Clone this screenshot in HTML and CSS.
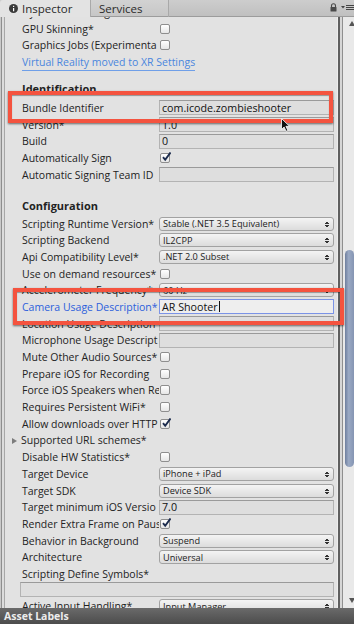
FILE: index.html
```html
<!DOCTYPE html>
<html lang="en">
  <head>
    <meta charset="UTF-8" />
    <title>Inspector</title>
    <link rel="stylesheet" href="styles.css">
  </head>

  <body>
    <div class="window">
      <div class="tabbar">
        <div class="tab active">
          <svg class="info" width="9" height="9" viewBox="0 0 9 9"><circle cx="4.5" cy="4.5" r="4.5" fill="#3a3a3a"/><rect x="4" y="4" width="1.2" height="3.3" fill="#fff"/><rect x="4" y="1.8" width="1.2" height="1.2" fill="#fff"/></svg>
          <span>Inspector</span>
        </div>
        <div class="tab">Services</div>
        <div class="tools">
          <svg width="7" height="9" viewBox="0 0 7 9"><path d="M1.5 4V2.8a2 2 0 0 1 4 0V4" fill="none" stroke="#4a4a4a" stroke-width="1.1"/><rect x="0.5" y="4" width="6" height="4.5" rx="0.6" fill="#4a4a4a"/></svg>
          <svg width="13" height="7" viewBox="0 0 13 7"><path d="M0 2h4L2 4.5z" fill="#444"/><rect x="5" y="1" width="8" height="1" fill="#444"/><rect x="5" y="3" width="8" height="1" fill="#444"/><rect x="5" y="5" width="8" height="1" fill="#444"/></svg>
        </div>
      </div>

      <div class="body">
        <div class="gutter"></div>
        <div class="inspector">
          <div class="list">
            <div class="row"><span class="label">Dynamic Batching</span><span class="value"><i class="check"></i></span></div>
            <div class="row"><span class="label">GPU Skinning*</span><span class="value"><i class="check"></i></span></div>
            <div class="row"><span class="label">Graphics Jobs (Experimenta</span><span class="value"><i class="check"></i></span></div>
            <div class="row"><span class="label full"><span class="link">Virtual Reality moved to XR Settings</span></span></div>

            <div class="row head first">Identification</div>
            <div class="row"><span class="label">Bundle Identifier</span><span class="value"><span class="field">com.icode.zombieshooter</span></span></div>
            <div class="row"><span class="label">Version*</span><span class="value"><span class="field">1.0</span></span></div>
            <div class="row"><span class="label">Build</span><span class="value"><span class="field">0</span></span></div>
            <div class="row"><span class="label">Automatically Sign</span><span class="value"><i class="check on"><svg viewBox="0 0 10 10"><path d="M2 5.2l2.2 2.6L9.5 0.5" fill="none" stroke="#1c2c4e" stroke-width="1.9"/></svg></i></span></div>
            <div class="row"><span class="label">Automatic Signing Team ID</span><span class="value"><span class="field"></span></span></div>

            <div class="row head second">Configuration</div>
            <div class="row"><span class="label">Scripting Runtime Version*</span><span class="value"><span class="popup">Stable (.NET 3.5 Equivalent)</span></span></div>
            <div class="row"><span class="label">Scripting Backend</span><span class="value"><span class="popup">IL2CPP</span></span></div>
            <div class="row"><span class="label">Api Compatibility Level*</span><span class="value"><span class="popup">.NET 2.0 Subset</span></span></div>
            <div class="row"><span class="label">Use on demand resources*</span><span class="value"><i class="check"></i></span></div>
            <div class="row"><span class="label">Accelerometer Frequency*</span><span class="value"><span class="popup">60 Hz</span></span></div>
            <div class="row"><span class="label focus">Camera Usage Description*</span><span class="value"><span class="field active">AR Shooter<b class="caret"></b></span></span></div>
            <div class="row"><span class="label">Location Usage Description</span><span class="value"><span class="field"></span></span></div>
            <div class="row"><span class="label">Microphone Usage Descript</span><span class="value"><span class="field"></span></span></div>
            <div class="row"><span class="label">Mute Other Audio Sources*</span><span class="value"><i class="check"></i></span></div>
            <div class="row"><span class="label">Prepare iOS for Recording</span><span class="value"><i class="check"></i></span></div>
            <div class="row"><span class="label">Force iOS Speakers when Re</span><span class="value"><i class="check"></i></span></div>
            <div class="row"><span class="label">Requires Persistent WiFi*</span><span class="value"><i class="check"></i></span></div>
            <div class="row"><span class="label">Allow downloads over HTTP</span><span class="value"><i class="check on"><svg viewBox="0 0 10 10"><path d="M2 5.2l2.2 2.6L9.5 0.5" fill="none" stroke="#1c2c4e" stroke-width="1.9"/></svg></i></span></div>
            <div class="row"><span class="label"><i class="fold"></i>Supported URL schemes*</span></div>
            <div class="row"><span class="label">Disable HW Statistics*</span><span class="value"><i class="check"></i></span></div>
            <div class="row"><span class="label">Target Device</span><span class="value"><span class="popup">iPhone + iPad</span></span></div>
            <div class="row"><span class="label">Target SDK</span><span class="value"><span class="popup">Device SDK</span></span></div>
            <div class="row"><span class="label">Target minimum iOS Versio</span><span class="value"><span class="field">7.0</span></span></div>
            <div class="row"><span class="label">Render Extra Frame on Paus</span><span class="value"><i class="check on"><svg viewBox="0 0 10 10"><path d="M2 5.2l2.2 2.6L9.5 0.5" fill="none" stroke="#1c2c4e" stroke-width="1.9"/></svg></i></span></div>
            <div class="row"><span class="label">Behavior in Background</span><span class="value"><span class="popup">Suspend</span></span></div>
            <div class="row"><span class="label">Architecture</span><span class="value"><span class="popup">Universal</span></span></div>
            <div class="row"><span class="label">Scripting Define Symbols*</span></div>
            <div class="field wide"></div>
            <div class="row"><span class="label">Active Input Handling*</span><span class="value"><span class="popup">Input Manager</span></span></div>
          </div>
        </div>
        <div class="divider"></div>
        <div class="scroll">
          <i class="arrow up"></i>
          <div class="thumb"></div>
          <i class="arrow down"></i>
        </div>
      </div>

      <div class="footer">Asset Labels</div>

      <div class="mark one"></div>
      <div class="mark two"></div>
      <svg class="pointer" width="10" height="14" viewBox="0 0 10 14"><path d="M0.5 0.5v11l2.6-2.5 2 4.3 1.8-0.8-2-4.2h3.6z" fill="#111" stroke="#fff" stroke-width="0.8"/></svg>
    </div>
  </body>
</html>
```

FILE: styles.css
```css
* {
  box-sizing: border-box;
}
body {
  margin: 0;
  width: 354px;
  height: 624px;
  overflow: hidden;
  font-family: "Open Sans", "DejaVu Sans", sans-serif;
  font-size: 10.5px;
  color: #222;
  background: #c4c4c4;
}
.window {
  position: relative;
  width: 354px;
  height: 624px;
  display: flex;
  flex-direction: column;
}

/* tabs */
.tabbar {
  height: 17px;
  flex: none;
  display: flex;
  background: linear-gradient(#cdcdcd, #bfbfbf);
  box-shadow: inset 0 -1px 0 #9c9c9c;
}
.tab {
  width: 78px;
  padding-left: 8px;
  display: flex;
  align-items: center;
  font-size: 11.5px;
  color: #2a2a2a;
  border-right: 1px solid #a9a9a9;
  background: linear-gradient(#d2d2d2, #c6c6c6);
  box-shadow: inset 0 -1px 0 #9c9c9c;
}
.tab.active {
  width: 91px;
  padding-left: 9px;
  background: #e3e3e3;
  border-top-left-radius: 3px;
  box-shadow: none;
}
.tab .info {
  margin-right: 4px;
}
.tools {
  margin-left: auto;
  display: flex;
  align-items: center;
  gap: 4px;
  padding-bottom: 2px;
}

/* body */
.body {
  flex: 1;
  display: flex;
  min-height: 0;
}
.gutter {
  width: 5px;
  flex: none;
  background: linear-gradient(to right, #c9c9c9 0 1px, #8e8e8e 1px 2px, #dcdcdc 2px 4px, #a7a7a7 4px 5px);
}
.inspector {
  flex: 1;
  overflow: hidden;
  background: #e2e2e2;
  padding-right: 3px;
}
.list {
  margin-top: -13.35px;
}
.row {
  height: 16.7px;
  display: flex;
  align-items: center;
  white-space: nowrap;
}
.label {
  flex: none;
  width: 154px;
  padding-left: 17px;
  overflow: hidden;
}
.label.full {
  width: auto;
  overflow: visible;
}
.label.focus {
  color: #2c60dc;
}
.value {
  flex: 1;
  display: flex;
  align-items: center;
  min-width: 0;
}
.link {
  color: #4a86de;
  border-bottom: 1px solid #6f9fe8;
  padding-bottom: 1px;
}
.head {
  font-weight: bold;
  font-size: 11px;
  padding-left: 17px;
}
.head.first {
  margin-top: 10.2px;
  margin-bottom: 2.3px;
}
.head.second {
  margin-top: 14.2px;
  margin-bottom: 1.3px;
}

/* controls */
.check {
  width: 10px;
  height: 10px;
  margin-left: 1px;
  border: 1px solid #8e8e8e;
  border-radius: 2px;
  background: linear-gradient(#ffffff, #e6e6e6);
  position: relative;
}
.check svg {
  position: absolute;
  left: 0;
  top: -2px;
  width: 10px;
  height: 10px;
}
.field {
  flex: 1;
  height: 15px;
  display: flex;
  align-items: center;
  padding-left: 2px;
  font-size: 10.7px;
  background: #dedede;
  border: 1px solid #b3b3b3;
  border-top-color: #9a9a9a;
  color: #111;
}
.field.active {
  background: #eeeeee;
  border: 1px solid #7b93e6;
}
.caret {
  width: 1px;
  height: 11px;
  margin-left: 1px;
  background: #111;
}
.field.wide {
  flex: none;
  margin: 0 0 0.6px 15px;
  height: 15px;
}
.popup {
  flex: 1;
  height: 14px;
  display: flex;
  align-items: center;
  padding-left: 3px;
  font-size: 9.2px;
  border: 1px solid #a2a2a2;
  border-radius: 3px;
  background: linear-gradient(#f4f4f4, #dcdcdc);
  position: relative;
}
.popup::after {
  content: "";
  position: absolute;
  right: 4px;
  top: 3px;
  width: 4px;
  height: 7px;
  background:
    linear-gradient(to bottom right, transparent 50%, #333 50%) 0 0 / 2px 3px no-repeat,
    linear-gradient(to bottom left, transparent 50%, #333 50%) 2px 0 / 2px 3px no-repeat,
    linear-gradient(to top right, transparent 50%, #333 50%) 0 4px / 2px 3px no-repeat,
    linear-gradient(to top left, transparent 50%, #333 50%) 2px 4px / 2px 3px no-repeat;
}
.fold {
  width: 0;
  height: 0;
  display: inline-block;
  margin-left: -10px;
  margin-right: 4px;
  border-left: 5px solid #7c7c7c;
  border-top: 3.5px solid transparent;
  border-bottom: 3.5px solid transparent;
}

/* scrollbar */
.divider {
  width: 6px;
  flex: none;
  background: linear-gradient(to right, #ededed 0 1px, #5f5f5f 1px 3px, #d6d6d6 3px 5px, #8f8f8f 5px 6px);
}
.scroll {
  width: 11px;
  flex: none;
  background: #e9e9e9;
  display: flex;
  flex-direction: column;
  padding-left: 2px;
}
.arrow {
  width: 0;
  height: 0;
  margin-left: 4px;
  border-left: 3px solid transparent;
  border-right: 3px solid transparent;
}
.arrow.up {
  margin-top: 4px;
  border-bottom: 5px solid #555;
}
.arrow.down {
  margin-top: auto;
  margin-bottom: 5px;
  border-top: 5px solid #555;
}
.thumb {
  margin-top: 224px;
  height: 217px;
  border-radius: 5px;
  background: linear-gradient(to right, #6f7f9e, #9aa9c4 40%, #8595b3);
}

/* footer */
.footer {
  height: 16px;
  flex: none;
  padding-left: 4px;
  display: flex;
  align-items: center;
  font-weight: bold;
  font-size: 10.5px;
  color: #ececec;
  background: linear-gradient(#6a6a6a, #4c4c4c);
}

/* annotation boxes */
.mark {
  position: absolute;
  border: 4px solid #f4533f;
  box-shadow: 0 1px 2px rgba(0, 0, 0, 0.55), inset 0 1px 1px rgba(0, 0, 0, 0.35);
}
.mark.one {
  left: 8px;
  top: 91px;
  width: 325px;
  height: 32px;
}
.mark.two {
  left: 13px;
  top: 288px;
  width: 331px;
  height: 37px;
}
.pointer {
  position: absolute;
  left: 281px;
  top: 118px;
}
```
